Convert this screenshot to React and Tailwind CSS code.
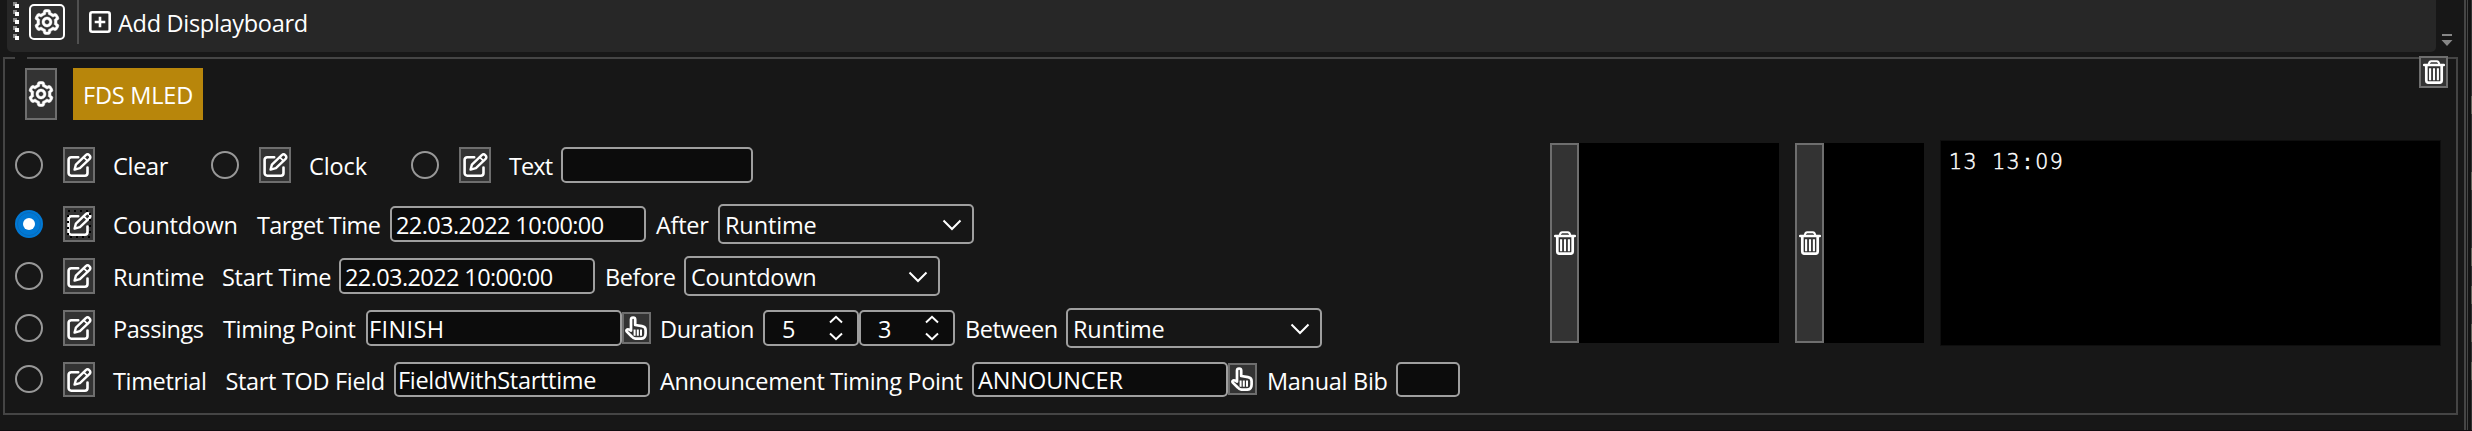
import { BiCog } from "react-icons/bi";

const EditIcon = () => (
  <svg viewBox="0 0 25 24" className="h-6 w-[25px] shrink-0" fill="none" stroke="white" strokeLinecap="round" strokeLinejoin="round">
    <path strokeWidth="2.6" d="M11.2 4.2H4.2a2.6 2.6 0 0 0-2.6 2.6v13.3a2.6 2.6 0 0 0 2.6 2.6h13.7a2.6 2.6 0 0 0 2.6-2.6V14.6" />
    <path strokeWidth="2.4" d="M18.8 2.1a2.7 2.7 0 0 1 3.8 3.8L12.9 15.2 7.6 16.6 8.9 11.6Z" />
    <path strokeWidth="1.8" d="M16.7 4.2 20.4 7.9" />
  </svg>
);

const TrashIcon = () => (
  <svg viewBox="0 0 22 24" className="h-6 w-[22px] shrink-0" fill="none" stroke="white">
    <path strokeWidth="2" d="M5.6 4.6C6 2.2 7 1.2 8.2 1.2h5.6c1.2 0 2.2 1 2.6 3.4" />
    <path strokeWidth="2.3" strokeLinecap="round" d="M1.1 5h19.8" />
    <path strokeWidth="2.7" d="M3.3 5.5v15a2.3 2.3 0 0 0 2.3 2.2h10.8a2.3 2.3 0 0 0 2.3-2.2v-15" />
    <path strokeWidth="2.1" d="M7.1 8.2v12M11 8.2v12M14.9 8.2v12" />
  </svg>
);

const HandIcon = () => (
  <svg viewBox="0 0 22 24" className="h-6 w-[22px] shrink-0" fill="none" stroke="white" strokeLinecap="round" strokeLinejoin="round">
    <path strokeWidth="2.7" d="M6 14.6V3.6a2.1 2.1 0 0 1 4.2 0V9l6.8 1.2c2.2.4 3.6 1.4 3.6 3.8v3.5c0 3.2-2 5.2-5 5.2H11c-2 0-3.2-.8-4.3-2.2l-4.9-4.9c-.9-1.1.2-2.8 1.9-2.2Z" />
    <path strokeWidth="2" strokeLinecap="butt" d="M9.6 13.4v6.4M12.8 13.4v6.4M16 13.4v6.4" />
  </svg>
);

const Radio = ({ on, className = "" }) => (
  <span
    className={`mt-1.5 flex size-7 shrink-0 items-center justify-center rounded-full ${
      on ? "bg-[#0078d4]" : "border-2 border-[#989898]"
    } ${className}`}
  >
    {on && (
      <span className="flex size-6 items-center justify-center rounded-full border border-[#0a6ab8]">
        <span className="size-3 rounded-full bg-white" />
      </span>
    )}
  </span>
);

const EditButton = ({ focus, className = "h-9" }) => (
  <button className={`relative mt-0.5 ml-5 flex w-8 shrink-0 items-center justify-center border-2 border-[#6e6e6e] bg-[#333] ${className}`}>
    <EditIcon />
    {focus && (
      <svg viewBox="0 0 24 28" className="absolute top-0.5 left-0.5 h-7 w-6" fill="none" stroke="black" strokeWidth="2" strokeDasharray="2 4">
        <rect x="1" y="1" width="22" height="26" />
      </svg>
    )}
  </button>
);

const Label = ({ children, className = "" }) => (
  <span className={`h-10 shrink-0 pt-px leading-10 whitespace-nowrap ${className}`}>{children}</span>
);

const Field = ({ children, className = "" }) => (
  <div className={`mt-0.5 flex shrink-0 items-center overflow-hidden rounded-[5px] border-2 border-[#9f9f9f] bg-[#0c0c0c] whitespace-nowrap ${className}`}>
    <span className="pt-px">{children}</span>
  </div>
);

const Combo = ({ children, className = "" }) => (
  <div className={`flex h-10 w-64 shrink-0 items-center justify-between rounded-[5px] border-2 border-[#9f9f9f] bg-[#161616] pr-2.5 pl-[5px] ${className}`}>
    <span className="pt-px">{children}</span>
    <svg viewBox="0 0 20 12" className="mt-0.5 h-3 w-5" fill="none" stroke="white" strokeWidth="2">
      <path d="M1.5 1.5 10 10l8.5-8.5" />
    </svg>
  </div>
);

const Spin = ({ children }) => (
  <div className="mt-0.5 flex h-9 w-24 shrink-0 items-center justify-between rounded-[5px] border-2 border-[#9f9f9f] bg-[#0c0c0c] pr-3.5 pl-[17px]">
    <span className="pt-px">{children}</span>
    <svg viewBox="0 0 14 26" className="h-[26px] w-3.5" fill="none" stroke="white" strokeWidth="2">
      <path d="M1 7.5 7 1.8l6 5.7M1 18.5l6 5.7 6-5.7" />
    </svg>
  </div>
);

const HandButton = ({ className = "mt-1" }) => (
  <button className={`flex h-8 w-[29px] shrink-0 items-center justify-center border-2 border-[#6e6e6e] bg-[#333] pr-px ${className}`}>
    <HandIcon />
  </button>
);

const Preview = ({ className }) => (
  <div className="mt-[-2px] mr-4 flex h-[200px] shrink-0">
    <button className="flex w-[29px] items-center justify-center border-2 border-[#6e6e6e] bg-[#333]">
      <TrashIcon />
    </button>
    <div className={`bg-black ${className}`} />
  </div>
);

const Toolbar = () => (
  <div className="flex h-[52px] w-[2429px] rounded-b-[5px] bg-[#272727]">
    <svg viewBox="0 0 6 52" className="ml-1.5 h-[52px] w-1.5">
      {[2, 10, 18, 26, 34].map((y) => (
        <g key={y}>
          <rect x="0" y={y} width="4" height="4" fill="#8a8a8a" />
          <rect x="2" y={y + 2} width="4" height="4" fill="white" />
        </g>
      ))}
    </svg>
    <button className="mt-1 ml-2.5 flex size-9 items-center justify-center rounded-[5px] border-2 border-white bg-[#333]">
      <BiCog className="size-[30px] shrink-0 stroke-white [stroke-width:0.4]" />
    </button>
    <div className="ml-3 h-11 w-0.5 bg-[#505050]" />
    <svg viewBox="0 0 22 22" className="mt-[11px] ml-2.5 size-[22px]" fill="none" stroke="white" strokeWidth="2.6">
      <rect x="1.3" y="1.3" width="19.4" height="19.4" rx="2" />
      <path d="M5.7 11h10.6M11 5.7v10.6" />
    </svg>
    <span className="ml-[7px] pt-[3px] leading-10 tracking-[-0.3px]">Add Displayboard</span>
  </div>
);

export default function App() {
  return (
    <div className="flex h-[431px] w-[2472px] overflow-hidden border-b border-[#100b0f] bg-[#171717] font-['Open_Sans',sans-serif] text-[23.5px] leading-8 text-white">
      <div className="w-[2464px] shrink-0">
        <div className="flex pl-[7px]">
          <Toolbar />
          <svg viewBox="0 0 12 14" className="mt-[33px] ml-[5px] h-3.5 w-3" fill="#868686">
            <path d="M1 1h10v2H1zM.5 7h11L6 13z" />
          </svg>
        </div>

        <section className="relative mt-[5px] ml-[3px] h-[358px] w-[2455px] border-2 border-[#454545] pt-[9px]">
          <span className="absolute -top-0.5 left-2.5 h-0.5 w-3 bg-[#171717]" />
          <button className="absolute -top-[3px] right-2 flex h-8 w-[29px] items-center justify-center border-2 border-[#6e6e6e] bg-[#333]">
            <TrashIcon />
          </button>

          <header className="flex gap-4 pl-5">
            <button className="flex h-[52px] w-8 items-center justify-center border-2 border-[#6e6e6e] bg-[#333]">
              <BiCog className="size-[30px] shrink-0 stroke-white [stroke-width:0.4]" />
            </button>
            <div className="h-[52px] w-[130px] bg-[#b8860b] pt-px pl-2.5 leading-[52px] tracking-[-0.2px] whitespace-nowrap">FDS MLED</div>
          </header>

          <div className="mt-[25px] flex">
            <div className="w-[1545px] shrink-0 pl-2.5">
              <div className="flex h-10 items-start">
                <Radio />
                <EditButton />
                <Label className="ml-[18px] w-[98px] tracking-[-0.3px]">Clear</Label>
                <Radio />
                <EditButton />
                <Label className="ml-[18px] w-[102px] tracking-[-0.1px]">Clock</Label>
                <Radio />
                <EditButton />
                <Label className="ml-[18px] w-[52px] tracking-[-0.9px]">Text</Label>
                <Field className="h-9 w-48" />
              </div>

              <div className="mt-[19px] flex h-10 items-start">
                <Radio on />
                <EditButton focus />
                <Label className="ml-[18px] w-[144px] tracking-[-0.3px]">Countdown</Label>
                <Label className="w-[133px] tracking-[-0.6px]">Target Time</Label>
                <Field className="h-9 w-64 pl-1 tracking-[-0.6px]">22.03.2022 10:00:00</Field>
                <Label className="w-[72px] pl-2.5 tracking-[-0.3px]">After</Label>
                <Combo className="tracking-[-0.13px]">Runtime</Combo>
              </div>

              <div className="mt-3 flex h-10 items-start">
                <Radio />
                <EditButton />
                <Label className="ml-[18px] w-[109px] tracking-[-0.2px]">Runtime</Label>
                <Label className="w-[117px] tracking-[-0.3px]">Start Time</Label>
                <Field className="h-9 w-64 pl-1 tracking-[-0.6px]">22.03.2022 10:00:00</Field>
                <Label className="w-[89px] pl-2.5 tracking-[-0.45px]">Before</Label>
                <Combo className="tracking-[-0.2px]">Countdown</Combo>
              </div>

              <div className="mt-3 flex h-10 items-start">
                <Radio />
                <EditButton />
                <Label className="ml-[18px] w-[110px] tracking-[-0.42px]">Passings</Label>
                <Label className="w-[143px] tracking-[-0.35px]">Timing Point</Label>
                <Field className="h-9 w-64 pl-px tracking-[0.4px]">FINISH</Field>
                <HandButton />
                <Label className="w-28 pl-[9px] tracking-[-0.36px]">Duration</Label>
                <Spin>5</Spin>
                <Spin>3</Spin>
                <Label className="w-[111px] pl-2.5 tracking-[-0.45px]">Between</Label>
                <Combo className="tracking-[-0.13px]">Runtime</Combo>
              </div>

              <div className="mt-3 flex h-10 items-start">
                <Radio className="-translate-y-px" />
                <EditButton className="h-[35px]" />
                <Label className="ml-[18px] w-[111px] tracking-[-0.36px]">Timetrial</Label>
                <Label className="w-[170px] pl-[1.5px] tracking-[-0.33px]">Start TOD Field</Label>
                <Field className="h-[35px] w-64 pl-0.5 tracking-[-0.3px]">FieldWithStarttime</Field>
                <Label className="w-[322px] pl-2.5 tracking-[-0.37px]">Announcement Timing Point</Label>
                <Field className="h-[35px] w-64 pl-1 tracking-[-0.1px]">ANNOUNCER</Field>
                <HandButton className="mt-[3px]" />
                <Label className="w-[139px] pl-2.5 tracking-[-0.3px]">Manual Bib</Label>
                <Field className="h-[35px] w-16" />
              </div>
            </div>

            <Preview className="w-[200px]" />
            <Preview className="w-[100px]" />
            <div className="mt-[-5px] h-[206px] w-[501px] shrink-0 border border-[#0e0e0e] bg-black pt-[5px] pl-2 font-['DejaVu_Sans',sans-serif] text-[20.5px] font-extralight tracking-[1.36px] [-webkit-text-stroke:0.5px_white] [word-spacing:6.5px]">
              13 13<span className="px-[3px] font-normal">:</span>09
            </div>
          </div>
        </section>
      </div>

      <svg viewBox="0 0 8 431" className="h-[431px] w-2 shrink-0">
        <rect x="0" y="0" width="2" height="431" fill="#454545" />
        <rect x="3" y="0" width="1" height="431" fill="#454545" />
        <rect x="4" y="0" width="3" height="431" fill="#131313" />
        <rect x="7" y="0" width="1" height="431" fill="#333" />
        {[96, 172, 248, 286, 324, 362].map((y) => (
          <rect key={y} x="7" y={y} width="1" height="18" fill="#64645c" />
        ))}
      </svg>
    </div>
  );
}
